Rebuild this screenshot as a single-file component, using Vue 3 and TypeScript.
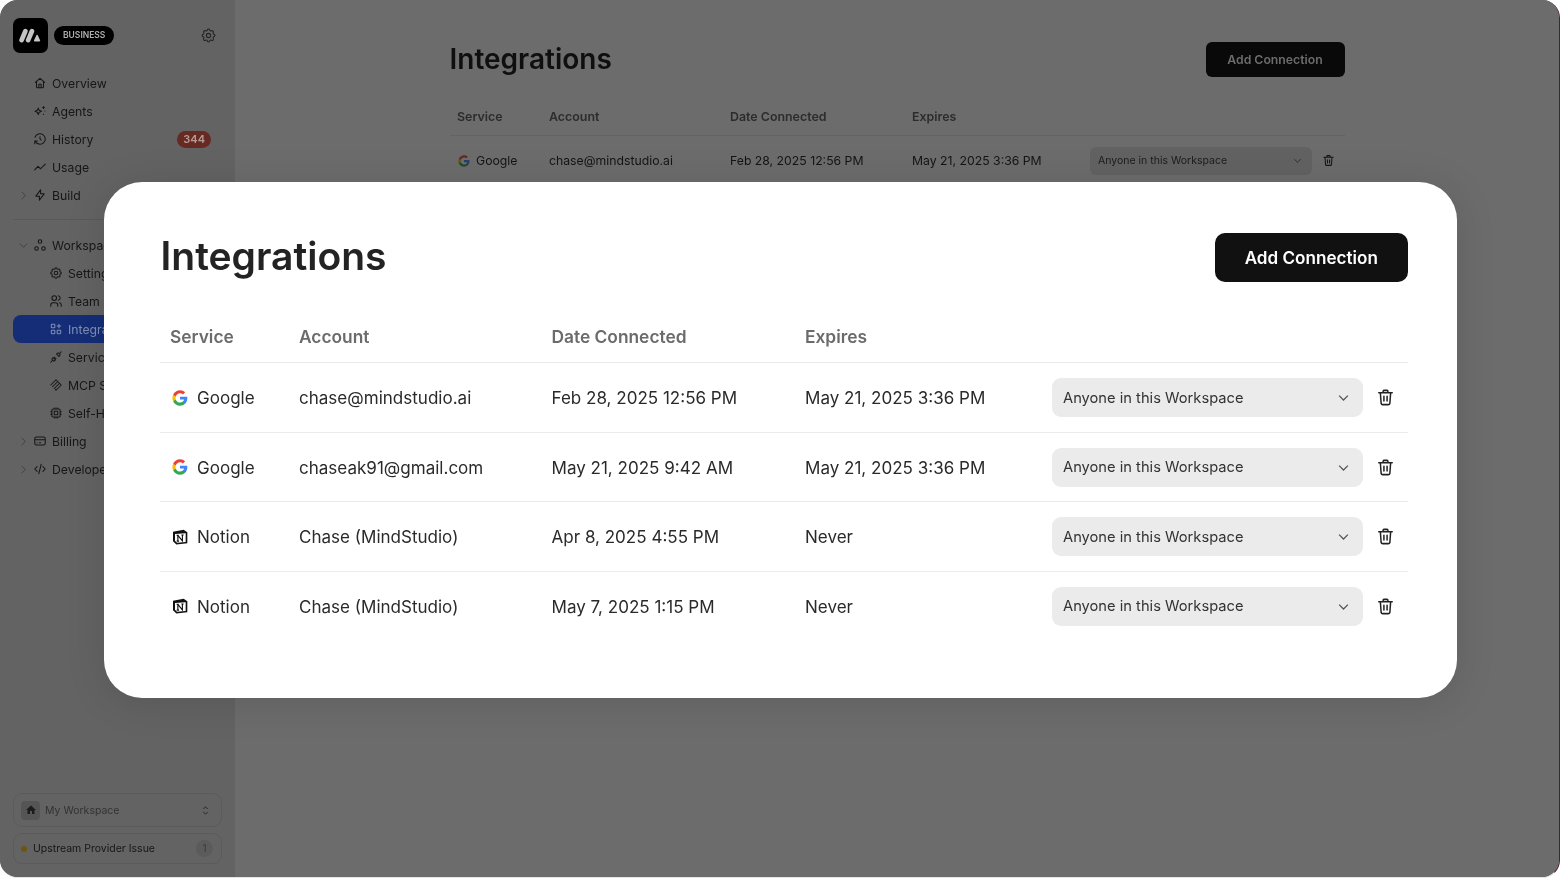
<script setup lang="ts">
type Row = { icon: 'google' | 'notion'; service: string; account: string; connected: string; expires: string }

const rows: Row[] = [
  { icon: 'google', service: 'Google', account: 'chase@mindstudio.ai', connected: 'Feb 28, 2025 12:56 PM', expires: 'May 21, 2025 3:36 PM' },
  { icon: 'google', service: 'Google', account: 'chaseak91@gmail.com', connected: 'May 21, 2025 9:42 AM', expires: 'May 21, 2025 3:36 PM' },
  { icon: 'notion', service: 'Notion', account: 'Chase (MindStudio)', connected: 'Apr 8, 2025 4:55 PM', expires: 'Never' },
  { icon: 'notion', service: 'Notion', account: 'Chase (MindStudio)', connected: 'May 7, 2025 1:15 PM', expires: 'Never' },
]

type Nav = { label: string; icon: string; caret?: 'right' | 'down'; child?: boolean; active?: boolean; badge?: string; gapBefore?: boolean }

const nav: Nav[] = [
  { label: 'Overview', icon: 'home' },
  { label: 'Agents', icon: 'sparkle' },
  { label: 'History', icon: 'history', badge: '344' },
  { label: 'Usage', icon: 'usage' },
  { label: 'Build', icon: 'bolt', caret: 'right' },
  { label: 'Workspace', icon: 'workspace', caret: 'down', gapBefore: true },
  { label: 'Settings', icon: 'gear', child: true },
  { label: 'Team', icon: 'team', child: true },
  { label: 'Integrations', icon: 'apps', child: true, active: true },
  { label: 'Service Routers', icon: 'plug', child: true },
  { label: 'MCP Servers', icon: 'mcp', child: true },
  { label: 'Self-Hosted', icon: 'chip', child: true },
  { label: 'Billing', icon: 'card', caret: 'right' },
  { label: 'Developer', icon: 'code', caret: 'right' },
]

const gearPath = 'M10.3 4.3c.4-1.8 3-1.8 3.4 0a1.7 1.7 0 0 0 2.6 1.1c1.5-.9 3.3.8 2.4 2.4a1.7 1.7 0 0 0 1 2.5c1.8.5 1.8 3 0 3.4a1.7 1.7 0 0 0-1 2.6c.9 1.5-.9 3.3-2.4 2.4a1.7 1.7 0 0 0-2.6 1c-.4 1.8-3 1.8-3.4 0a1.7 1.7 0 0 0-2.6-1c-1.5.9-3.3-.9-2.4-2.4a1.7 1.7 0 0 0-1-2.6c-1.8-.4-1.8-3 0-3.4a1.7 1.7 0 0 0 1-2.5c-.9-1.6.9-3.3 2.4-2.4 1 .6 2.3.1 2.6-1.1zM9 12a3 3 0 1 0 6 0 3 3 0 1 0-6 0'

const icons: Record<string, string> = {
  home: 'M4 11l8-7 8 7M6 9.500V19a1 1 0 0 0 1 1h10a1 1 0 0 0 1-1V9.500M10 20v-6h4v6',
  sparkle: 'M9 7l1.600 3.900L14.500 12.500l-3.900 1.600L9 18l-1.600-3.900L3.500 12.500l3.900-1.600zM18 4.500v3M16.500 6h3M18 17.500v.5M20.500 12v.01',
  history: 'M12 8v4l2 2M3.500 9a9 9 0 1 1 .5 7M3 20v-4.500h4.500',
  usage: 'M3 17l5.500-6 4.500 4 8-8',
  bolt: 'M13 3v7h6l-8 11v-7H5z',
  workspace: 'M9 6a3 3 0 1 0 6 0 3 3 0 1 0-6 0M3 18a3 3 0 1 0 6 0 3 3 0 1 0-6 0M15 18a3 3 0 1 0 6 0 3 3 0 1 0-6 0',
  gear: gearPath,
  team: 'M5 7a4 4 0 1 0 8 0 4 4 0 1 0-8 0M3 21v-2a4 4 0 0 1 4-4h4a4 4 0 0 1 4 4v2M16 3.100a4 4 0 0 1 0 7.800M21 21v-2a4 4 0 0 0-3-3.900',
  apps: 'M4 5a1 1 0 0 1 1-1h4a1 1 0 0 1 1 1v4a1 1 0 0 1-1 1H5a1 1 0 0 1-1-1zM4 15a1 1 0 0 1 1-1h4a1 1 0 0 1 1 1v4a1 1 0 0 1-1 1H5a1 1 0 0 1-1-1zM14 15a1 1 0 0 1 1-1h4a1 1 0 0 1 1 1v4a1 1 0 0 1-1 1h-4a1 1 0 0 1-1-1zM14 7h6M17 4v6',
  plug: 'M3 21l3-3M7 13l4 4-1.500 1.500a3 3 0 0 1-4-4zM21 3l-3 3M17 11l-4-4 1.500-1.500a3 3 0 0 1 4 4zM8 14l2-2M10 16l2-2',
  mcp: 'M3 12l9-9 3 3-9 9M6 15l9-9 3 3-9 9M9 18l9-9 3 3-9 9-1-1',
  chip: 'M5 7a2 2 0 0 1 2-2h10a2 2 0 0 1 2 2v10a2 2 0 0 1-2 2H7a2 2 0 0 1-2-2zM9 9h6v6H9zM3 10h2M3 14h2M19 10h2M19 14h2M10 3v2M14 3v2M10 19v2M14 19v2',
  card: 'M3 8a3 3 0 0 1 3-3h12a3 3 0 0 1 3 3v8a3 3 0 0 1-3 3H6a3 3 0 0 1-3-3zM3 10h18M7 15h.01M11 15h2',
  code: 'M7 8l-4 4 4 4M17 8l4 4-4 4M14 4l-4 16',
}
</script>

<template>
  <div class="frame">
    <div class="page">
      <aside class="sidebar">
        <div class="brand">
          <div class="logo">
            <svg viewBox="0 0 24 16" width="23" height="15">
              <path d="M2.500 13L6.500 3.500" class="logo-bar" />
              <path d="M9.500 13L13.500 3.500" class="logo-bar" />
              <path d="M16.500 13.500L19 8l2.500 5.500z" class="logo-peak" />
            </svg>
          </div>
          <span class="plan">BUSINESS</span>
          <svg class="brand-gear" viewBox="0 0 24 24" width="17" height="17"><path :d="gearPath" /></svg>
        </div>

        <nav class="nav">
          <template v-for="item in nav" :key="item.label">
            <div v-if="item.gapBefore" class="nav-divider"></div>
            <div class="nav-item" :class="{ child: item.child, active: item.active }">
              <svg v-if="item.caret" class="caret" viewBox="0 0 24 24" width="11" height="11">
                <path :d="item.caret === 'right' ? 'M8 4l8 8-8 8' : 'M4 8l8 8 8-8'" />
              </svg>
              <svg class="nav-icon" viewBox="0 0 24 24" width="14" height="14"><path :d="icons[item.icon]" /></svg>
              <span class="nav-label">{{ item.label }}</span>
              <span v-if="item.badge" class="badge">{{ item.badge }}</span>
            </div>
          </template>
        </nav>

        <div class="side-bottom">
          <div class="side-box workspace">
            <span class="ws-icon">
              <svg viewBox="0 0 24 24" width="12" height="12"><path d="M12 3L2 12h3v8h5v-6h4v6h5v-8h3z" fill="currentColor" /></svg>
            </span>
            <span class="ws-name">My Workspace</span>
            <svg class="ws-sort" viewBox="0 0 24 24" width="11" height="11"><path d="M7 9l5-5 5 5M7 15l5 5 5-5" /></svg>
          </div>
          <div class="side-box status">
            <span class="dot"></span>
            <span class="status-text">Upstream Provider Issue</span>
            <span class="count">1</span>
          </div>
        </div>
      </aside>

      <main class="main">
        <section class="panel behind">
          <header class="panel-head">
            <h1>Integrations</h1>
            <button class="primary">Add Connection</button>
          </header>
          <div class="table">
            <div class="row head">
              <div>Service</div><div>Account</div><div>Date Connected</div><div>Expires</div><div></div>
            </div>
            <div v-for="(row, i) in rows" :key="i" class="row">
              <div class="service">
                <svg v-if="row.icon === 'google'" class="svc-icon" viewBox="0 0 24 24">
                  <path fill="#27406a" d="M23 12.300c0-.8-.1-1.600-.2-2.300H12v4.400h6.200c-.3 1.400-1.100 2.600-2.300 3.400v2.800h3.700c2.100-2 3.400-4.900 3.400-8.300z" />
                  <path fill="#1e4a2a" d="M12 23.500c3.100 0 5.700-1 7.600-2.800l-3.700-2.900c-1 .7-2.300 1.100-3.900 1.100-3 0-5.500-2-6.400-4.700H1.800v2.900c1.900 3.800 5.800 6.400 10.200 6.400z" />
                  <path fill="#6e5410" d="M5.600 14.200c-.5-1.400-.5-3 0-4.400V6.900H1.800c-1.600 3.200-1.600 7 0 10.200z" />
                  <path fill="#672720" d="M12 5c1.700 0 3.200.6 4.400 1.700l3.300-3.300C17.700 1.600 15.100.500 12 .500 7.600.500 3.700 3.100 1.800 6.900l3.800 2.900C6.500 7 9 5 12 5z" />
                </svg>
                <span>{{ row.service }}</span>
              </div>
              <div>{{ row.account }}</div>
              <div>{{ row.connected }}</div>
              <div>{{ row.expires }}</div>
              <div class="access">
                <div class="select">
                  <span>Anyone in this Workspace</span>
                  <svg class="chev" viewBox="0 0 24 24"><path d="M5 9l7 7 7-7" /></svg>
                </div>
                <svg class="trash" viewBox="0 0 24 24">
                  <path d="M3.500 6h17M9 6V4a1 1 0 0 1 1-1h4a1 1 0 0 1 1 1v2M5.500 6l1 13.500a2 2 0 0 0 2 1.500h7a2 2 0 0 0 2-1.500l1-13.500M10 10.500v6M14 10.500v6" />
                </svg>
              </div>
            </div>
          </div>
        </section>
      </main>
    </div>

    <section class="panel front">
      <header class="panel-head">
        <h1>Integrations</h1>
        <button class="primary">Add Connection</button>
      </header>
      <div class="table">
        <div class="row head">
          <div>Service</div><div>Account</div><div>Date Connected</div><div>Expires</div><div></div>
        </div>
        <div v-for="(row, i) in rows" :key="i" class="row">
          <div class="service">
            <svg v-if="row.icon === 'google'" class="svc-icon" viewBox="0 0 24 24">
              <path fill="#4285F4" d="M23 12.300c0-.8-.1-1.600-.2-2.300H12v4.400h6.200c-.3 1.400-1.100 2.600-2.300 3.400v2.800h3.700c2.100-2 3.400-4.900 3.400-8.300z" />
              <path fill="#34A853" d="M12 23.500c3.100 0 5.700-1 7.600-2.800l-3.700-2.900c-1 .7-2.300 1.100-3.900 1.100-3 0-5.500-2-6.400-4.700H1.800v2.900c1.900 3.800 5.800 6.400 10.200 6.400z" />
              <path fill="#FBBC05" d="M5.600 14.200c-.5-1.400-.5-3 0-4.400V6.900H1.800c-1.600 3.200-1.600 7 0 10.200z" />
              <path fill="#EA4335" d="M12 5c1.700 0 3.200.6 4.400 1.700l3.300-3.300C17.700 1.600 15.100.500 12 .500 7.600.500 3.700 3.100 1.800 6.900l3.800 2.900C6.500 7 9 5 12 5z" />
            </svg>
            <svg v-else class="svc-icon" viewBox="0 0 24 24">
              <path d="M1.500 4L17.500 1.200 23 5V21.500L6.500 23.300 1.500 18.500z" fill="#111" />
              <path d="M4.500 7.500L20.500 6.300V19.500L7.500 20.700 4.500 17.700z" fill="#fff" />
              <path d="M8.800 18V9.500M8.800 9.700L15.600 17.800V9M7 18.200h3.600M7 9.500h3M14 9h3.500" stroke="#111" stroke-width="1.700" fill="none" />
            </svg>
            <span>{{ row.service }}</span>
          </div>
          <div>{{ row.account }}</div>
          <div>{{ row.connected }}</div>
          <div>{{ row.expires }}</div>
          <div class="access">
            <div class="select">
              <span>Anyone in this Workspace</span>
              <svg class="chev" viewBox="0 0 24 24"><path d="M5 9l7 7 7-7" /></svg>
            </div>
            <svg class="trash" viewBox="0 0 24 24">
              <path d="M3.500 6h17M9 6V4a1 1 0 0 1 1-1h4a1 1 0 0 1 1 1v2M5.500 6l1 13.500a2 2 0 0 0 2 1.500h7a2 2 0 0 0 2-1.500l1-13.500M10 10.500v6M14 10.500v6" />
            </svg>
          </div>
        </div>
      </div>
    </section>
  </div>
</template>

<style>
html, body { margin: 0; background: #fff; }
</style>

<style scoped>
.frame {
  position: relative;
  width: 1560px;
  height: 878px;
  box-sizing: border-box;
  overflow: hidden;
  border-radius: 18px;
  border-right: 1px solid #5c1a26;
  border-bottom: 1px solid #e4e4e4;
  background: #6c6c6c;
  font-family: Inter, "Liberation Sans", sans-serif;
  color: #1c1c1c;
}
/* the page under the dialog is painted already dimmed */
.page {
  display: flex;
  height: 100%;
  background: #6c6c6c;
  filter: blur(0.6px);
}

.sidebar {
  width: 235px;
  flex-shrink: 0;
  box-sizing: border-box;
  display: flex;
  flex-direction: column;
  background: #636363;
  padding: 17px 13px 13px;
}
.brand { display: flex; align-items: center; gap: 6px; height: 36px; }
.logo {
  width: 35px;
  height: 35px;
  border-radius: 7px;
  background: #000;
  display: flex;
  align-items: center;
  justify-content: center;
}
.logo-bar { stroke: #c4c4c4; stroke-width: 5; stroke-linecap: round; fill: none; }
.logo-peak { fill: #c4c4c4; stroke: #c4c4c4; stroke-width: 1.600; stroke-linejoin: round; }
.plan {
  background: #000;
  color: #b0b0b0;
  font-size: 8.500px;
  font-weight: 600;
  line-height: 19px;
  padding: 0 9px;
  border-radius: 10px;
}
.brand-gear { margin-left: auto; margin-right: 5px; fill: none; stroke: #222; stroke-width: 1.500; }

.nav { display: flex; flex-direction: column; margin-top: 16px; }
.nav-item {
  position: relative;
  display: flex;
  align-items: center;
  height: 28px;
  padding-left: 20px;
  font-size: 12.250px;
  color: #161616;
  border-radius: 8px;
}
.nav-item.child { padding-left: 36px; }
.nav-item.active { background: #142d76; color: #7f8fb2; margin-right: -6px; }
.nav-icon { flex-shrink: 0; fill: none; stroke: currentColor; stroke-width: 1.800; stroke-linecap: round; stroke-linejoin: round; margin-right: 5px; }
.caret { position: absolute; left: 5px; fill: none; stroke: #3a3a3a; stroke-width: 1.800; }
.nav-label { white-space: nowrap; }
.badge {
  margin-left: auto;
  margin-right: 11px;
  background: #672a22;
  color: #b89a95;
  font-size: 11px;
  font-weight: 600;
  line-height: 17px;
  padding: 0 6px;
  border-radius: 9px;
}
.nav-divider { height: 1px; background: #5a5a5a; margin: 10px 0 11px; }

.side-bottom { margin-top: auto; display: flex; flex-direction: column; gap: 6px; }
.side-box {
  display: flex;
  align-items: center;
  box-sizing: border-box;
  border: 1px solid #5b5b5b;
  border-radius: 9px;
  font-size: 10.500px;
}
.workspace { height: 34px; padding: 0 10px 0 7px; gap: 5px; color: #333; }
.ws-icon { width: 19px; height: 19px; border-radius: 4px; background: #555; color: #1c1c1c; display: flex; align-items: center; justify-content: center; }
.ws-sort { margin-left: auto; fill: none; stroke: #222; stroke-width: 2; }
.status { height: 31px; padding: 0 8px 0 7px; color: #161616; }
.dot { width: 6px; height: 6px; border-radius: 50%; background: #6a5512; margin-right: 6px; }
.count { margin-left: auto; width: 17px; line-height: 17px; text-align: center; border-radius: 50%; background: #5b5b5b; color: #3a3a3a; font-size: 10px; }

.main { flex: 1; display: flex; justify-content: center; }

.panel { box-sizing: border-box; }
.panel-head { display: flex; align-items: center; justify-content: space-between; }
h1 { margin: 0; font-weight: 600; line-height: 1; }
.primary { font-family: inherit; border: 0; font-weight: 600; }
.table { display: flex; flex-direction: column; }
.row {
  display: grid;
  box-sizing: border-box;
  align-items: center;
  border-top: 1px solid;
}
.row.head { border-top: 0; font-weight: 600; }
.service { display: flex; align-items: center; }
.access { display: flex; align-items: center; justify-content: space-between; }
.select {
  flex: 1;
  display: flex;
  align-items: center;
  justify-content: space-between;
}
.chev { fill: none; stroke-width: 2; }
.trash { fill: none; stroke-width: 1.900; stroke-linecap: round; stroke-linejoin: round; }

/* copy on the page behind the dialog */
.behind { width: 895px; padding-top: 42px; }
.behind .panel-head { height: 35px; }
.behind h1 { font-size: 28px; color: #0f0f0f; padding-bottom: 2px; }
.behind .primary { width: 139px; height: 35px; border-radius: 6px; font-size: 12.250px; background: #090909; color: #6c6c6c; }
.behind .table { margin-top: 20px; }
.behind .row { grid-template-columns: 92px 181px 182px 178px 1fr; height: 50px; padding-left: 7.500px; font-size: 12.250px; border-color: #636363; color: #141414; }
.behind .row.head { height: 38px; font-size: 12.400px; color: #2c2c2c; }
.behind .svc-icon { width: 12px; height: 12px; margin: 0 6px 0 1px; }
.behind .select { height: 28px; border-radius: 6px; padding: 0 9px 0 8px; font-size: 10.500px; background: #626262; color: #1c1c1c; }
.behind .chev { width: 11px; height: 11px; stroke: #2c2c2c; }
.behind .trash { width: 13px; height: 13px; margin: 0 10px; stroke: #141414; }

/* the dialog */
.front {
  position: absolute;
  left: 104px;
  top: 182px;
  width: 1353px;
  height: 516px;
  padding: 51px 49px 0 56px;
  background: #fff;
  border-radius: 38px;
  box-shadow: 0 4px 40px rgba(0, 0, 0, 0.12);
  color: #2a2a2a;
  filter: blur(0.3px);
}
.front .panel-head { height: 49px; }
.front h1 { font-size: 39px; color: #232323; padding: 0 0 4px 0.500px; }
.front .primary { width: 193.500px; height: 49px; border-radius: 10px; font-size: 17.100px; background: #111; color: #fff; }
.front .table { margin-top: 29px; }
.front .row { grid-template-columns: 129px 252.500px 253.500px 247px 1fr; height: 69.500px; padding: 0.500px 0 0 10px; font-size: 17.050px; border-color: #ececec; }
.front .row.head { height: 51px; padding-top: 0; font-size: 17.350px; color: #6b6b6b; }
.front .svc-icon { width: 16px; height: 16px; margin: 0 9px 0 2px; }
.front .select { height: 39px; border-radius: 9px; padding: 0 12px 0 11px; font-size: 14.700px; background: #ebebeb; color: #333; }
.front .chev { width: 15px; height: 15px; stroke: #555; }
.front .trash { width: 19px; height: 19px; margin: 0 13px 0 13px; stroke: #222; }
</style>
